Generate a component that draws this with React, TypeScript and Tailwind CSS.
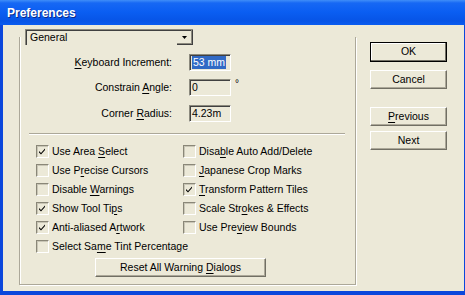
import { FC, ReactNode } from "react";

const U: FC<{ children: ReactNode }> = ({ children }) => (
  <span className="underline underline-offset-[2px] decoration-1">{children}</span>
);

const Check: FC<{ checked?: boolean; children: ReactNode }> = ({ checked, children }) => (
  <div className="h-[19px] flex items-center">
    <div className="w-[13px] h-[13px] shrink-0 border-t border-l border-[#8a8778] shadow-[inset_1px_1px_0_#c9c6b6] border-r border-b border-r-white border-b-white flex items-center justify-center">
      {checked && (
        <svg width="9" height="9" viewBox="0 0 9 9">
          <path d="M1 4 L3 6 L7 1.5 L7 3 L3 7.5 L1 5.5 Z" fill="#000" />
        </svg>
      )}
    </div>
    <span className="ml-[3px] whitespace-nowrap">{children}</span>
  </div>
);

const Field: FC<{ value: string; selected?: boolean }> = ({ value, selected }) => (
  <div className="w-[42px] h-[17px] border-t border-l border-[#8c8a7e] border-r border-b border-r-white border-b-white shadow-[inset_1px_1px_0_#404040] pl-[2px] pt-[1px] flex items-start">
    <span className={selected ? "bg-[#316ac5] text-white px-[1px] leading-[13px]" : "leading-[13px]"}>{value}</span>
  </div>
);

const Button: FC<{ children: ReactNode; primary?: boolean; className?: string }> = ({ children, primary, className }) => (
  <div
    className={
      "flex items-center justify-center " +
      (primary
        ? "border border-black shadow-[inset_-1px_-1px_0_#716f64,inset_1px_1px_0_#fff] "
        : "border-t border-l border-white border-r border-b border-r-[#716f64] border-b-[#716f64] shadow-[inset_-1px_-1px_0_#aca899] ") +
      (className ?? "")
    }
  >
    {children}
  </div>
);

export default function App() {
  return (
    <div className="w-[465px] h-[295px] bg-[#0b47dc] flex flex-col overflow-hidden font-['Liberation_Sans',Arial,sans-serif] text-[10.5px] text-black">
      <div className="h-[25px] shrink-0 bg-[linear-gradient(to_bottom,#3f8ef8_0px,#1768f4_3px,#0a5ef2_12px,#0754e6_21px,#0a5cf0_25px)] flex items-center pl-[7px]">
        <span className="text-white font-bold text-[12px] [text-shadow:1px_1px_0_#0a2a8a]">Preferences</span>
      </div>
      <div className="flex-1 ml-[3px] mr-[1px] mb-[4px] bg-[#ece9d8] flex pt-[4px] pl-[16px]">
        <div className="w-[337px] flex flex-col">
          <div className="ml-[6px] w-[168px] h-[16px] flex border-t border-l border-[#8c8a7e] shadow-[inset_1px_1px_0_#404040] relative z-10">
            <span className="flex-1 pl-[4px] leading-[14px]">General</span>
            <div className="w-[16px] h-full border-r border-b border-[#404040] shadow-[inset_-1px_-1px_0_#8c8a7e] flex items-center justify-center">
              <svg width="5" height="3" viewBox="0 0 5 3">
                <path d="M0 0 H5 L2.5 3 Z" fill="#000" />
              </svg>
            </div>
          </div>
          <div className="-mt-[8px] h-[248px] border-l border-r border-b border-[#aca899] shadow-[inset_1px_0_0_#fff,1px_1px_0_#fff] pt-[17px] flex flex-col">
            <div className="flex flex-col gap-[8px]">
              <div className="flex items-center">
                <span className="w-[152px] text-right">
                  <U>K</U>eyboard Increment:
                </span>
                <div className="ml-[17px]">
                  <Field value="53 mm" selected />
                </div>
              </div>
              <div className="flex items-center">
                <span className="w-[152px] text-right">
                  Constrain <U>A</U>ngle:
                </span>
                <div className="ml-[17px]">
                  <Field value="0" />
                </div>
                <span className="ml-[4px] self-start -mt-[3px] text-[10px]">°</span>
              </div>
              <div className="flex items-center mt-[1px]">
                <span className="w-[152px] text-right">
                  Corner <U>R</U>adius:
                </span>
                <div className="ml-[17px]">
                  <Field value="4.23m" />
                </div>
              </div>
            </div>
            <div className="mt-[11px] ml-[9px] w-[316px] h-[2px] border-t border-[#aca899] border-b border-b-white" />
            <div className="mt-[7px] pl-[16px] grid grid-cols-[147px_1fr]">
              <Check checked>
                Use Area <U>S</U>elect
              </Check>
              <Check>
                Disa<U>b</U>le Auto Add/Delete
              </Check>
              <Check>
                Use P<U>r</U>ecise Cursors
              </Check>
              <Check>
                <U>J</U>apanese Crop Marks
              </Check>
              <Check>
                Disable <U>W</U>arnings
              </Check>
              <Check checked>
                <U>T</U>ransform Pattern Tiles
              </Check>
              <Check checked>
                Show Tool Ti<U>p</U>s
              </Check>
              <Check>
                Scale Str<U>o</U>kes &amp; Effects
              </Check>
              <Check checked>
                Anti-aliased A<U>r</U>twork
              </Check>
              <Check>
                Use Pre<U>v</U>iew Bounds
              </Check>
              <Check>
                Select Sa<U>m</U>e Tint Percentage
              </Check>
            </div>
            <Button className="mt-[2px] ml-[75px] w-[171px] h-[19px]">
              <span>
                Reset All Warning <U>D</U>ialogs
              </span>
            </Button>
          </div>
        </div>
        <div className="ml-[14px] flex flex-col">
          <Button primary className="mt-[13px] w-[77px] h-[20px]">
            OK
          </Button>
          <Button className="mt-[8px] w-[77px] h-[19px]">Cancel</Button>
          <Button className="mt-[18px] w-[77px] h-[19px]">
            <span>
              <U>P</U>revious
            </span>
          </Button>
          <Button className="mt-[5px] w-[77px] h-[19px]">Next</Button>
        </div>
      </div>
    </div>
  );
}
